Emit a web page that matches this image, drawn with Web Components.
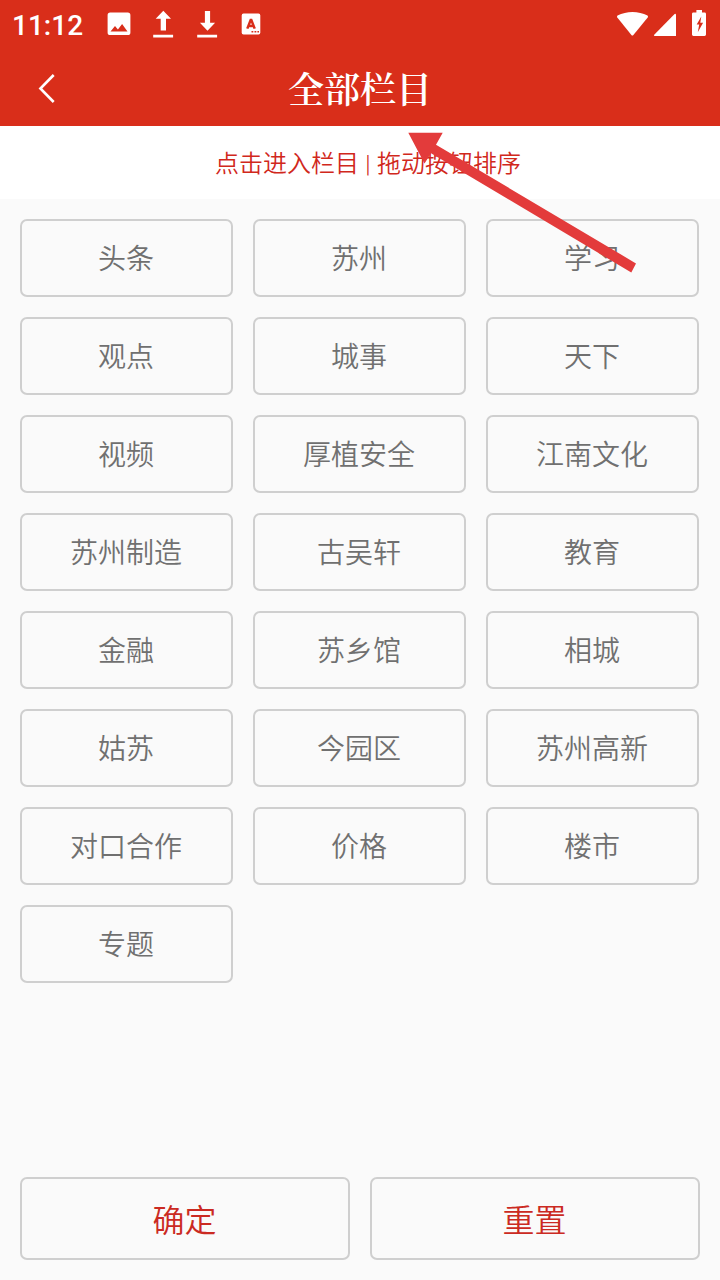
<!DOCTYPE html>
<html lang="zh-CN">
<head>
<meta charset="utf-8">
<title>全部栏目</title>
<style>
	body{
		margin:0;
		background:#fafafa;
		font-family: Roboto, "Noto Sans CJK SC", sans-serif;
	}
</style>
</head>
<body>
<channel-page></channel-page>
<script>
// small helper: turns markup into a template we can clone in every instance
function createTemplate(html) {
	const template = document.createElement("template");
	template.innerHTML = html;
	return template;
}

// attaches the shadow root and fills it with a copy of the class's template
class BaseElement extends HTMLElement {
	constructor() {
		super();
		this.attachShadow({ mode: "open" });
		this.shadowRoot.appendChild(this.constructor.template.content.cloneNode(true));
	}
}

// system status bar: clock and notifications on the left, signal on the right
class StatusBar extends BaseElement {
	static template = createTemplate(`
<style>
	:host{
		display:flex;
		justify-content:space-between;
		height:48px;
		background:#d92e1a;
		color:#fff;
	}
	.clock{
		box-sizing:border-box;
		width:100px;
		padding-left:12px;
		font-size:28px;
		font-weight:500;
		line-height:51px;
	}
	.left{
		display:flex;
	}
	svg{
		display:block;
		fill:#fff;
	}
</style>
<div class="left">
	<div class="clock">11:12</div>
	<svg width="170" height="48" viewBox="100 0 170 48">
		<path fill-rule="evenodd" d="M110.2 12.6h17.6a2.6 2.6 0 0 1 2.6 2.6v17.2a2.6 2.6 0 0 1-2.6 2.6h-17.6a2.6 2.6 0 0 1-2.6-2.6V15.200a2.600 2.600 0 0 1 2.600-2.600zM110.500 31.600h17l-5.400-7.600-4.200 5.400-2.900-3.500z"/>
		<path d="M163.300 10.800l7.700 8h-5v11.700h-5.300V18.800h-5zM153.200 34.700h19.900v2.700h-19.900z"/>
		<path d="M204.900 11h5.200v11.800h5l-7.600 8-7.600-8h5zM197.200 34.700h19.900v2.700h-19.900z"/>
		<rect x="241.700" y="13.600" width="18.600" height="20.900" rx="1.800"/>
		<path fill="none" stroke="#d92e1a" stroke-width="2.500" stroke-linejoin="bevel" d="M247.300 28.600l3.700-9.300 3.700 9.300M248.300 26h5.400"/>
		<path fill="#d92e1a" d="M251.500 31h1.800v1.600h-1.800zM254.500 31h1.800v1.600h-1.800zM257.400 31h1.600v1.600h-1.600z"/>
	</svg>
</div>
<svg width="110" height="48" viewBox="610 0 110 48">
	<path d="M617.500 15.600c9-4.800 21-4.800 30 0q1 .9.200 2L633.400 35q-1 1.200-2 0L617.300 17.600q-.8-1.100.2-2z"/>
	<path d="M676 14.700V36h-21.300q-1.400-.3-.5-1.300L674.600 14q1.200-.8 1.400.7z"/>
	<path d="M696.400 10h5.600v2.500h2.600q1.400 0 1.400 1.400v20.700q0 1.400-1.400 1.400h-11.200q-1.400 0-1.400-1.400V13.900q0-1.400 1.400-1.400h3z"/>
	<path fill="#d92e1a" d="M701.300 16.600l-4.600 8h2.500l-1.400 7.700 5.300-9.500h-2.800z"/>
</svg>
`);
}

// title bar with the back chevron, the title comes in through the slot
class TitleBar extends BaseElement {
	static template = createTemplate(`
<style>
	:host{
		display:grid;
		grid-template-columns:100px 1fr 100px;
		align-items:center;
		height:78px;
		background:#d92e1a;
		color:#fff;
	}
	h1{
		margin:0;
		padding-top:2px;
		text-align:center;
		font:600 36px/50px "Noto Serif CJK SC", "Source Han Serif SC", "Liberation Serif", "Noto Sans CJK SC", serif;
	}
	svg{
		display:block;
		fill:none;
		stroke:#fff;
		stroke-width:2.6;
	}
</style>
<svg width="100" height="78"><path d="M53.700 27L40.400 40.500 53.700 54"/></svg>
<h1><slot></slot></h1>
`);
}

// white strip with the usage hint
class HintStrip extends BaseElement {
	static template = createTemplate(`
<style>
	:host{
		display:block;
		box-sizing:border-box;
		height:73px;
		padding-left:16px;
		background:#fff;
		color:#d1281c;
		font-size:24px;
		font-weight:350;
		line-height:76px;
		text-align:center;
		word-spacing:0.4px;
	}
</style>
<slot></slot>
`);
}

// outlined button, size and colour can be changed with custom properties
class OutlineButton extends BaseElement {
	static template = createTemplate(`
<style>
	:host{
		display:block;
	}
	button{
		display:block;
		box-sizing:border-box;
		width:100%;
		height:var(--button-height, 78px);
		margin:0;
		padding:var(--button-shift, 4px) 1px 0 0;
		border:2px solid #cfcfcf;
		border-radius:7px;
		background:transparent;
		color:var(--button-color, #707070);
		font-family:inherit;
		font-size:var(--button-font, 28px);
		font-weight:350;
		line-height:1;
		text-align:center;
	}
</style>
<button><slot></slot></button>
`);
}

// three column grid, one button for each channel
class ChannelGrid extends BaseElement {
	static template = createTemplate(`
<style>
	:host{
		display:grid;
		grid-template-columns:repeat(3, 213px);
		align-content:start;
		gap:20px;
		padding:20px;
	}
</style>
`);

	connectedCallback() {
		const channels = [
			"头条", "苏州", "学习",
			"观点", "城事", "天下",
			"视频", "厚植安全", "江南文化",
			"苏州制造", "古吴轩", "教育",
			"金融", "苏乡馆", "相城",
			"姑苏", "今园区", "苏州高新",
			"对口合作", "价格", "楼市",
			"专题"
		];
		channels.forEach((name) => {
			const button = document.createElement("outline-button");
			button.textContent = name;
			this.shadowRoot.appendChild(button);
		});
	}
}

// the arrow lies over the header strip and the first row
class PointerArrow extends BaseElement {
	static template = createTemplate(`
<style>
	:host{
		position:absolute;
		left:400px;
		top:126px;
		pointer-events:none;
	}
	svg{
		display:block;
		fill:#e33b3b;
	}
</style>
<svg width="240" height="150" viewBox="400 126 240 150">
	<path d="M408.300 132.800L442.700 132.800 436 144.700 636 263.400 631.300 272.500 431 153.200 424.500 163.500z"/>
</svg>
`);
}

class ChannelPage extends BaseElement {
	static template = createTemplate(`
<style>
	:host{
		position:relative;
		display:flex;
		flex-direction:column;
		width:720px;
		height:1280px;
		overflow:hidden;
	}
	channel-grid{
		flex:1;
	}
	footer{
		display:grid;
		grid-template-columns:1fr 1fr;
		gap:20px;
		padding:0 20px 20px;
		--button-height:83px;
		--button-font:32px;
		--button-shift:4px;
		--button-color:#cb2a22;
	}
</style>
<status-bar></status-bar>
<title-bar>全部栏目</title-bar>
<hint-strip>点击进入栏目 | 拖动按钮排序</hint-strip>
<channel-grid></channel-grid>
<footer>
	<outline-button>确定</outline-button>
	<outline-button>重置</outline-button>
</footer>
<pointer-arrow></pointer-arrow>
`);
}

window.customElements.define("status-bar", StatusBar);
window.customElements.define("title-bar", TitleBar);
window.customElements.define("hint-strip", HintStrip);
window.customElements.define("outline-button", OutlineButton);
window.customElements.define("channel-grid", ChannelGrid);
window.customElements.define("pointer-arrow", PointerArrow);
window.customElements.define("channel-page", ChannelPage);
</script>
</body>
</html>
